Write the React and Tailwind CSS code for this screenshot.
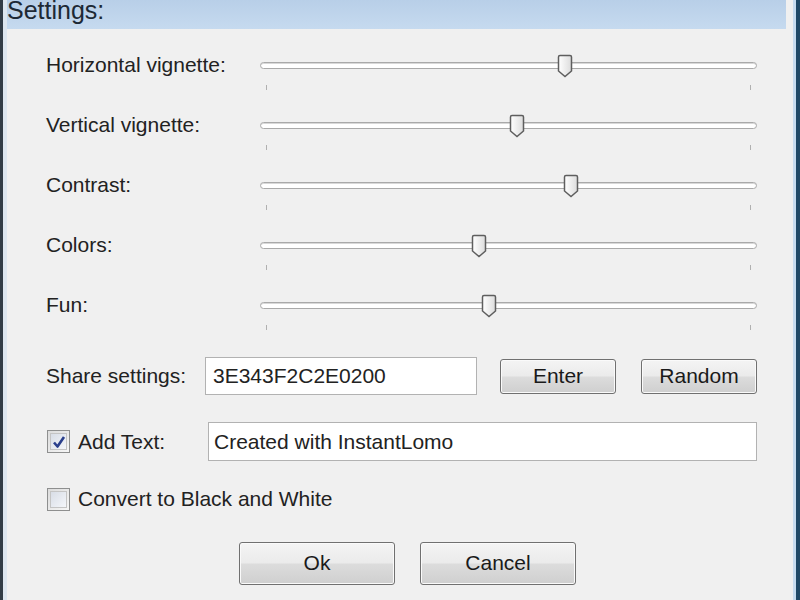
import React from "react";

const sliders = [
  { label: "Horizontal vignette:", pos: 305 },
  { label: "Vertical vignette:", pos: 257 },
  { label: "Contrast:", pos: 311 },
  { label: "Colors:", pos: 219 },
  { label: "Fun:", pos: 229 },
];

function Thumb({ left }) {
  return (
    <svg
      className="absolute top-[19px]"
      style={{ left: left - 8 }}
      width="16"
      height="24"
      viewBox="0 0 16 24"
    >
      <defs>
        <linearGradient id="thumbg" x1="0" y1="0" x2="1" y2="0">
          <stop offset="0" stopColor="#ffffff" />
          <stop offset="1" stopColor="#dcdcdc" />
        </linearGradient>
      </defs>
      <path
        d="M3 1.5 H13 Q14.5 1.5 14.5 3 V17 L8 22.5 L1.5 17 V3 Q1.5 1.5 3 1.5 Z"
        fill="url(#thumbg)"
        stroke="#5e5e5e"
        strokeWidth="1.5"
      />
    </svg>
  );
}

function SliderRow({ label, pos }) {
  return (
    <div className="flex h-[60px] items-center">
      <div className="w-[214px] shrink-0">{label}</div>
      <div className="relative h-full flex-1">
        <div className="absolute left-0 right-0 top-[27px] h-[7px] rounded-full border border-[#a9a9a9] bg-white shadow-[inset_0_1px_0_#d8d8d8]" />
        <Thumb left={pos} />
        <div className="absolute left-[6px] top-[50px] h-[5px] w-px bg-[#b0b0b0]" />
        <div className="absolute right-[6px] top-[50px] h-[5px] w-px bg-[#b0b0b0]" />
      </div>
    </div>
  );
}

function WinButton({ children, className }) {
  return (
    <button
      className={
        "rounded-[3px] border border-[#707070] bg-[linear-gradient(#f4f4f4_0%,#ebebeb_48%,#dcdcdc_52%,#cfcfcf_100%)] pb-[2px] text-[21px] text-[#1a1a1a] shadow-[inset_0_0_0_1px_#fafafa] " +
        className
      }
    >
      {children}
    </button>
  );
}

function Check({ checked }) {
  return (
    <div className="flex h-[23px] w-[23px] items-center justify-center border border-[#8e8f8f] bg-[linear-gradient(135deg,#dcdcdc,#f6f6f6)] p-[2px]">
      <div className="flex h-full w-full items-center justify-center border border-[#c4c4c4] bg-[linear-gradient(135deg,#d8dde6,#f4f6fa)]">
        {checked && (
          <svg width="14" height="14" viewBox="0 0 14 14">
            <path
              d="M2 7.5 L5.5 11.5 L12 2"
              fill="none"
              stroke="#2a3f8c"
              strokeWidth="2.6"
              strokeLinejoin="round"
            />
          </svg>
        )}
      </div>
    </div>
  );
}

export default function App() {
  return (
    <div
      className="flex h-[600px] w-[800px] overflow-hidden text-[21px] text-[#222222]"
      style={{ fontFamily: '"Liberation Sans", Arial, sans-serif' }}
    >
      <div className="w-[3px] shrink-0 bg-[#323c46]" />
      <div className="w-[4px] shrink-0 bg-[#dde6ef]" />
      <div className="flex min-w-0 flex-1 flex-col">
        <div className="h-[29px] shrink-0 overflow-hidden bg-[linear-gradient(#b8cfe8,#c6daef)]">
          <div className="-mt-[8px] text-[25px] leading-[36px] text-[#1d2935]">Settings:</div>
        </div>
        <div className="flex-1 bg-[#f0f0f0] pl-[39px] pr-[29px] pt-[6px]">
          {sliders.map((s) => (
            <SliderRow key={s.label} label={s.label} pos={s.pos} />
          ))}

          <div className="mt-[22px] flex h-[38px] items-center">
            <div className="w-[159px] shrink-0">Share settings:</div>
            <div className="flex h-[38px] w-[272px] items-center border border-[#b2b2b2] bg-white px-[7px]">
              3E343F2C2E0200
            </div>
            <WinButton className="ml-[23px] h-[35px] w-[116px]">Enter</WinButton>
            <WinButton className="ml-[25px] h-[35px] w-[116px]">Random</WinButton>
          </div>

          <div className="mt-[27px] flex h-[39px] items-center">
            <div className="ml-px flex w-[161px] shrink-0 items-center gap-[8px]">
              <Check checked />
              <span>Add Text:</span>
            </div>
            <div className="flex h-[39px] flex-1 items-center border border-[#b2b2b2] bg-white px-[5px]">
              Created with InstantLomo
            </div>
          </div>

          <div className="mt-[23px] flex h-[30px] items-center gap-[8px] pl-px">
            <Check />
            <span>Convert to Black and White</span>
          </div>

          <div className="ml-[193px] mt-[28px] flex gap-[25px]">
            <WinButton className="h-[43px] w-[156px]">Ok</WinButton>
            <WinButton className="h-[43px] w-[156px]">Cancel</WinButton>
          </div>
        </div>
      </div>
      <div className="w-[7px] shrink-0 bg-[#f0f0f0]" />
      <div className="w-[3px] shrink-0 bg-[#c6dbef]" />
      <div className="w-[4px] shrink-0 bg-[#1f4866]" />
    </div>
  );
}
